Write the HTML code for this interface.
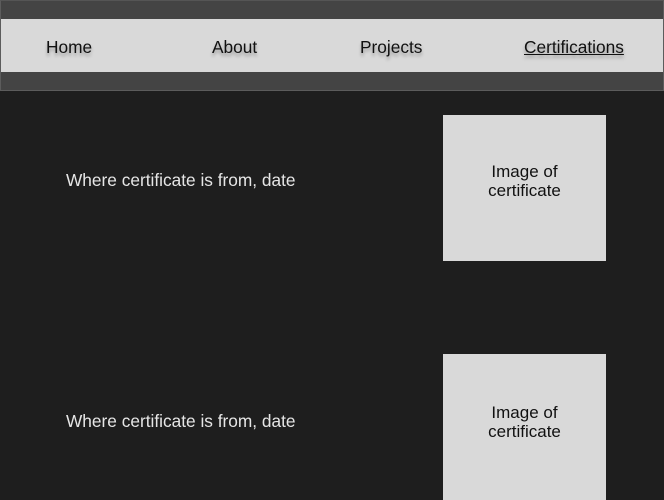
<!DOCTYPE html>
<html><head><style>
body{margin:0;width:664px;height:500px;overflow:hidden;background:#1e1e1e;font-family:"Liberation Sans",sans-serif;position:relative}
.hdr{position:absolute;left:0;top:0;width:662px;height:89px;background:#444;border:1px solid #5c5c5c;border-top-color:#555}
.band{position:absolute;left:1px;top:19px;width:662px;height:53px;background:#d9d9d9}
.nav{position:absolute;top:38px;font-size:17.3px;color:#111;text-shadow:0 3px 3px rgba(0,0,0,.3);line-height:19px}
.txt{position:absolute;left:66px;font-size:17.3px;color:#e6e6e6;line-height:19px}
.box{position:absolute;left:443px;width:163px;background:#d9d9d9;color:#111;font-size:17px;text-align:center;line-height:19px}
.box div{position:absolute;left:0;right:0}
</style></head><body>
<div class="hdr"></div>
<div class="band"></div>
<div class="nav" style="left:46px">Home</div>
<div class="nav" style="left:212px">About</div>
<div class="nav" style="left:360px">Projects</div>
<div class="nav" style="left:524px;text-decoration:underline">Certifications</div>
<div class="txt" style="top:171px">Where certificate is from, date</div>
<div class="box" style="top:115px;height:146px"><div style="top:47px">Image of<br>certificate</div></div>
<div class="txt" style="top:412px">Where certificate is from, date</div>
<div class="box" style="top:354px;height:146px"><div style="top:49px">Image of<br>certificate</div></div>
</body></html>
